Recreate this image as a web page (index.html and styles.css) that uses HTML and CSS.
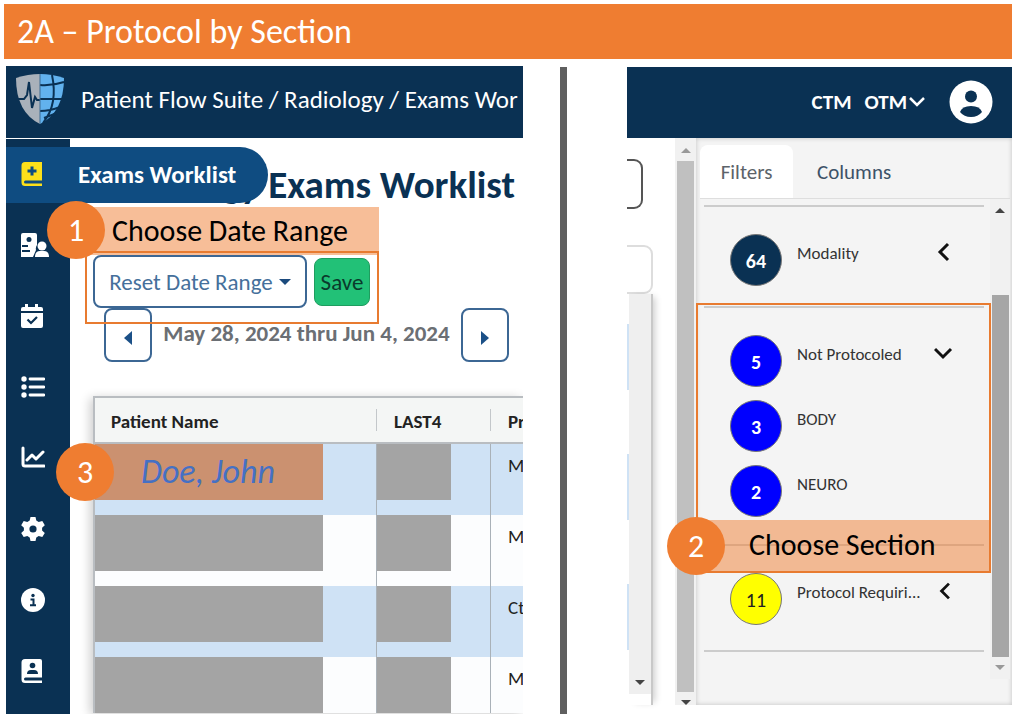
FILE: index.html
```html
<!DOCTYPE html>
<html lang="en">
<head>
<meta charset="utf-8">
<meta name="viewport" content="width=device-width, initial-scale=1">
<title>2A – Protocol by Section</title>
<link rel="stylesheet" href="styles.css">
</head>
<body>
<h1 class="slide-title">2A – Protocol by Section</h1>
<div class="slide">
  <section class="worklist">
    <header class="topbar">
      <svg class="logo" viewBox="0 0 50 52" aria-hidden="true">
        <path d="M1 5Q13 1 25 1V51Q1 39 1 5Z" fill="#a9b1ba"/>
        <path d="M25 1Q37 1 49 5Q49 39 25 51Z" fill="#62b2ee"/>
        <path d="M1 26h8l3-4 2-13 3 26 3-11 2 3h3" fill="none" stroke="#0a3153" stroke-width="2"/>
        <path d="M25 12Q37 13 49 9M25 26h24M25 38Q35 38 45 34M37 2Q40 16 38 28Q36 40 28 50M42 40L29 45" fill="none" stroke="#0a3153" stroke-width="2"/>
        <path d="M25 1v50" stroke="#3d6a92" stroke-width="1"/>
      </svg>
      <span class="crumbs">Patient Flow Suite / Radiology / Exams Wor</span>
    </header>
    <div class="workspace">
      <nav class="sidebar" aria-label="Main">
        <a class="nav-item active" href="#worklist">
          <svg class="icon" viewBox="0 0 24 24"><path d="M4 0h17v18.500H4.500a1.500 1.500 0 0 0 0 3H21V24H4a3.500 3.500 0 0 1-3.500-3.500v-17A3.500 3.500 0 0 1 4 0Z" fill="#fde01a"/><path d="M11 4.500v9M6.500 9h9" stroke="#0f4c81" stroke-width="3"/><path d="M4.500 20h13" stroke="#0f4c81" stroke-width="2"/></svg>
          <span>Exams Worklist</span>
        </a>
        <a class="nav-item" href="#patients" aria-label="Patients">
          <svg class="icon wide" viewBox="0 0 28 24"><path d="M2 0h12a2 2 0 0 1 2 2v10a6 6 0 0 0-1 5l-3 7H0V2a2 2 0 0 1 2-2Z"/><circle cx="21" cy="13" r="4.500"/><path d="M14 24q0-6 5-6h4q5 0 5 6Z"/><circle cx="8" cy="6.500" r="2.500" fill="#0a3153"/><path d="M1 13h6M1 18h8" stroke="#0a3153" stroke-width="2"/></svg>
        </a>
        <a class="nav-item" href="#calendar" aria-label="Calendar">
          <svg class="icon" viewBox="0 0 24 24"><path d="M4 0h3v3h7V0h3v3h3q2 0 2 2v2H0V5q0-2 2-2h2ZM0 9h22v13q0 2-2 2H2q-2 0-2-2Z"/><path d="M6.500 15.500l3.500 3.500 6-6" fill="none" stroke="#0a3153" stroke-width="2.200"/></svg>
        </a>
        <a class="nav-item" href="#list" aria-label="List">
          <svg class="icon" viewBox="0 0 24 24"><circle cx="3" cy="4" r="2.700"/><circle cx="3" cy="12" r="2.700"/><circle cx="3" cy="20" r="2.700"/><path d="M9 4h14M9 12h14M9 20h14" stroke="#fff" stroke-width="2.800" stroke-linecap="round"/></svg>
        </a>
        <a class="nav-item" href="#stats" aria-label="Statistics">
          <svg class="icon" viewBox="0 0 24 24"><path d="M2 2v16q0 2 2 2h19M6 14l5-5 4 4 7-7" fill="none" stroke="#fff" stroke-width="3" stroke-linecap="round" stroke-linejoin="round"/></svg>
        </a>
        <a class="nav-item" href="#settings" aria-label="Settings">
          <svg class="icon" viewBox="0 0 24 24"><path d="M9.500 0h5l.8 3.600 2.400 1.400 3.600-1.100 2.500 4.300-2.700 2.500v2.700l2.700 2.500-2.500 4.200-3.600-1.100-2.400 1.400-.8 3.600h-5l-.8-3.600L6.300 19l-3.600 1.100L.2 15.900l2.700-2.500v-2.700L.2 8.200l2.500-4.300L6.300 5l2.400-1.400Z"/><circle cx="12" cy="12" r="3.600" fill="#0a3153"/></svg>
        </a>
        <a class="nav-item" href="#info" aria-label="Information">
          <svg class="icon" viewBox="0 0 24 24"><circle cx="12" cy="12" r="12"/><circle cx="12" cy="7.500" r="1.700" fill="#0a3153"/><path d="M9.500 11.500h3V17M9 17.200h6" fill="none" stroke="#0a3153" stroke-width="2"/></svg>
        </a>
        <a class="nav-item" href="#contacts" aria-label="Contacts">
          <svg class="icon" viewBox="0 0 24 24"><path d="M4 0h15q2 0 2 2v16.500H4.500a1.500 1.500 0 0 0 0 3H21V24H4a3.500 3.500 0 0 1-3.500-3.500v-17A3.500 3.500 0 0 1 4 0Z"/><circle cx="11.500" cy="6.500" r="2.800" fill="#0a3153"/><path d="M6 15q0-4 4-4h3q4 0 4 4ZM5 19h16v1.500H5Z" fill="#0a3153"/></svg>
        </a>
      </nav>
      <main class="content">
        <h2 class="page-title">Radiology Exams Worklist</h2>
        <div class="actions">
          <button class="btn reset" type="button">Reset Date Range <i class="caret"></i></button>
          <button class="btn save" type="button">Save</button>
          <div class="range-frame"><div class="range-label">Choose Date Range</div><span class="step">1</span></div>
        </div>
        <div class="dates">
          <button class="btn arrow" type="button" aria-label="Previous"><svg viewBox="0 0 10 16"><path d="M9 1v14L1 8Z"/></svg></button>
          <span class="date-text">May 28, 2024 thru Jun 4, 2024</span>
          <button class="btn arrow" type="button" aria-label="Next"><svg viewBox="0 0 10 16"><path d="M1 1v14L9 8Z"/></svg></button>
        </div>
        <div class="grid">
          <table>
            <colgroup><col class="c-name"><col class="c-last"><col class="c-proc"></colgroup>
            <thead><tr><th>Patient Name</th><th>LAST4</th><th>Pr</th></tr></thead>
            <tbody>
              <tr><td><div class="mask named">Doe, John<span class="step">3</span></div></td><td><div class="mask"></div></td><td class="proc">M</td></tr>
              <tr><td><div class="mask"></div></td><td><div class="mask"></div></td><td class="proc">M</td></tr>
              <tr><td><div class="mask"></div></td><td><div class="mask"></div></td><td class="proc">Ct</td></tr>
              <tr><td><div class="mask"></div></td><td><div class="mask"></div></td><td class="proc">M</td></tr>
            </tbody>
          </table>
        </div>
      </main>
    </div>
  </section>
  <div class="divider"></div>
  <section class="filters">
    <header class="topbar account">
      <span>CTM</span>
      <button class="otm" type="button">OTM<svg viewBox="0 0 18 12"><path d="M2 2l7 7 7-7" fill="none" stroke="#fff" stroke-width="2.500"/></svg></button>
      <svg class="avatar" viewBox="0 0 44 44"><circle cx="22" cy="22" r="21.500" fill="#fff"/><circle cx="22" cy="16.500" r="6" fill="#0a3153"/><path d="M11 32q2-6 11-6t11 6q-4 5-11 5t-11-5Z" fill="#0a3153"/></svg>
    </header>
    <div class="filter-body">
      <div class="grid-edge">
        <div class="edge-box dark"></div>
        <div class="edge-box"></div>
        <div class="edge-grid">
          <div class="stripes"><i></i><i></i><i></i></div>
          <div class="edge-track"><i class="tri down"></i></div>
        </div>
      </div>
      <div class="page-scroll"><i class="tri up faint"></i><div class="thumb"></div><i class="tri down"></i></div>
      <aside class="panel">
        <div class="tabs" role="tablist">
          <button class="tab selected" role="tab" type="button">Filters</button>
          <button class="tab" role="tab" type="button">Columns</button>
        </div>
        <div class="panel-scroll">
          <div class="groups">
            <div class="group">
              <div class="row"><span class="count navy">64</span><span class="name">Modality</span><svg class="chev" viewBox="0 0 20 20"><path d="M14 2L6 10l8 8"/></svg></div>
            </div>
            <div class="group open">
              <div class="row"><span class="count">5</span><span class="name">Not Protocoled</span><svg class="chev" viewBox="0 0 20 20"><path d="M1 6l8 8 8-8"/></svg></div>
              <div class="row"><span class="count">3</span><span class="name">BODY</span></div>
              <div class="row"><span class="count">2</span><span class="name">NEURO</span></div>
              <div class="section-frame"><div class="section-label">Choose Section</div><span class="step">2</span></div>
            </div>
            <div class="group last">
              <div class="row"><span class="count yellow">11</span><span class="name">Protocol Requiri...</span><svg class="chev" viewBox="0 0 20 20"><path d="M14 2L6 10l8 8"/></svg></div>
            </div>
          </div>
          <div class="panel-bar"><i class="tri up"></i><div class="thumb"></div><i class="tri down faint"></i></div>
        </div>
      </aside>
    </div>
  </section>
</div>
</body>
</html>
```
FILE: styles.css
```css
* { box-sizing: border-box; }
body {
  margin: 0;
  padding: 4px 8px 10px 4px;
  background: #fff;
  color: #222;
  font-family: Calibri, Carlito, Lato, sans-serif;
}
button { font-family: inherit; cursor: pointer; }
.slide-title {
  margin: 0;
  padding: 0 13px;
  background: #ef7d31;
  color: #fff;
  font-size: 34px;
  font-weight: 400;
  line-height: 55px;
}
.slide {
  display: grid;
  grid-template-columns: minmax(0, 517fr) 104px minmax(0, 385fr);
  padding: 7px 0 0 2px;
}
.topbar {
  display: flex;
  align-items: center;
  height: 72px;
  background: #0a3153;
  color: #fff;
}

/* Worklist */
.worklist { overflow: hidden; }
.worklist .topbar { padding: 0 0 6px 9px; }
.logo { flex: none; width: 50px; height: 52px; }
.crumbs { margin-left: 16px; font-size: 25px; white-space: nowrap; }
.workspace { display: flex; padding-top: 1px; }
.sidebar { flex: none; width: 64px; height: 575px; background: #0a3153; }
.nav-item {
  display: flex;
  align-items: center;
  height: 56px;
  margin: 0 0 15px;
  padding-left: 15px;
  color: #fff;
  text-decoration: none;
}
.nav-item.active {
  position: relative;
  z-index: 2;
  width: 262px;
  margin: 8px 0 14px;
  padding-bottom: 2px;
  gap: 33px;
  border-radius: 0 28px 28px 0;
  background: #0f4c81;
  font-size: 25px;
  font-weight: 700;
  white-space: nowrap;
}
.icon { flex: none; width: 24px; height: 24px; fill: #fff; }
.icon.wide { width: 28px; }
.content { flex: 1; min-width: 0; padding-left: 23px; }
.page-title {
  display: flex;
  justify-content: flex-end;
  margin: 0;
  padding: 24px 8px 0 0;
  color: #0a3153;
  font-size: 39px;
  line-height: 44px;
  white-space: nowrap;
}
.actions {
  position: relative;
  display: flex;
  align-items: flex-start;
  gap: 7px;
  margin-top: 48px;
}
.btn {
  border: 2px solid #3c6794;
  border-radius: 8px;
  background: #fff;
  color: #45709b;
  font-size: 23px;
}
.reset {
  display: flex;
  align-items: center;
  justify-content: center;
  gap: 6px;
  width: 214px;
  height: 53px;
  padding: 0;
}
.caret {
  border: 6px solid transparent;
  border-top-color: #1b4a7d;
  border-bottom: 0;
}
.save {
  width: 56px;
  height: 48px;
  margin-top: 3px;
  padding: 0;
  border: 1px solid #1f9d5f;
  background: #22c177;
  color: #0a3a2c;
}
.range-frame {
  position: absolute;
  top: -48px;
  left: -8px;
  width: 294px;
  height: 117px;
  pointer-events: none;
}
.range-frame::after {
  content: "";
  position: absolute;
  inset: 44px 0 0;
  border: 2px solid #e87b30;
}
.range-label, .section-label {
  background: rgba(240, 125, 49, .5);
  color: #000;
  font-size: 30px;
  white-space: nowrap;
}
.range-label { height: 48px; padding-left: 27px; line-height: 48px; }
.step {
  position: absolute;
  z-index: 3;
  display: flex;
  align-items: center;
  justify-content: center;
  width: 58px;
  height: 58px;
  border-radius: 50%;
  background: #ef7d31;
  color: #fff;
  font-size: 32px;
  font-style: normal;
}
.range-frame .step { top: -6px; left: -38px; }
.dates { display: flex; padding: 0 14px 0 11px; justify-content: space-between; }
.arrow { width: 48px; height: 54px; padding: 0; }
.arrow svg { width: 10px; height: 16px; fill: #1b5087; vertical-align: middle; }
.date-text { color: #6b6f74; font-size: 23px; font-weight: 700; line-height: 50px; white-space: nowrap; }
.grid {
  margin-top: 34px;
  border: solid #b9bdc1;
  border-width: 2px 0 0 2px;
  box-shadow: -3px 2px 10px rgba(0, 0, 0, .2);
}
table { width: 100%; border-collapse: separate; border-spacing: 0; table-layout: fixed; }
.c-name { width: 281px; }
.c-last { width: 114px; }
th {
  position: relative;
  height: 46px;
  padding: 2px 0 0 16px;
  border-bottom: 2px solid #b9bdc1;
  background: #f4f6f5;
  color: #222;
  font-size: 19px;
  text-align: left;
  white-space: nowrap;
}
th + th { padding-left: 18px; }
th + th::before {
  content: "";
  position: absolute;
  inset: 11px auto 11px 0;
  border-left: 1px solid #c3c7ca;
}
td { height: 71px; padding: 0; vertical-align: top; }
td + td { border-left: 1px solid #a9b1b8; }
tbody tr { background: #fcfdfe; }
tbody tr:nth-child(odd) { background: #cfe2f5; }
tbody tr:last-child td { height: 56px; }
.mask { width: 74px; height: 56px; background: #a4a4a4; }
td:first-child .mask { width: 228px; }
.mask.named {
  position: relative;
  padding-left: 46px;
  background: #cb9170;
  color: #4570c4;
  font-size: 34px;
  font-style: italic;
  line-height: 55px;
}
.named .step { top: -1px; left: -39px; }
.proc { padding: 10px 0 0 17px; font-size: 19px; line-height: 24px; white-space: nowrap; }

.divider { justify-self: center; width: 7px; margin: 1px 0 0 -24px; background: #5f5f5f; }

/* Filters */
.filters { margin-top: 1px; }
.account { justify-content: flex-end; gap: 13px; padding: 0 19px 2px 0; height: 71px; font-size: 21px; font-weight: 700; }
.otm { display: flex; align-items: center; padding: 0; border: 0; background: none; color: #fff; font-size: 21px; font-weight: 700; }
.otm svg { width: 18px; height: 12px; margin-left: 1px; }
.avatar { width: 44px; height: 44px; margin-left: 10px; }
.filter-body { display: flex; height: 567px; }
.grid-edge { flex: none; display: flex; flex-direction: column; width: 48px; padding-top: 21px; }
.edge-box {
  width: 26px;
  height: 49px;
  border: 2px solid #ddd;
  border-left: 0;
  border-radius: 0 9px 9px 0;
}
.edge-box.dark { width: 16px; height: 50px; margin-bottom: 36px; border-color: #555; }
.edge-grid {
  display: flex;
  flex: 1;
  width: 26px;
  border-right: 2px solid #c8c8c8;
  box-shadow: 5px 0 7px -3px rgba(0, 0, 0, .2);
}
.stripes { display: flex; flex-direction: column; gap: 64px; width: 2px; padding-top: 30px; }
.stripes i { height: 66px; background: #cfe2f5; }
.edge-track { display: flex; flex: 1; align-items: flex-end; justify-content: center; margin-bottom: 11px; padding-bottom: 9px; background: #efefef; }
.tri { border: 5px solid transparent; }
.tri.up { border-top: 0; border-bottom-color: #444; }
.tri.down { border-bottom: 0; border-top-color: #444; }
.tri.up.faint { border-bottom-color: #999; }
.tri.down.faint { border-top-color: #999; }
.page-scroll {
  display: flex;
  flex: none;
  flex-direction: column;
  align-items: center;
  gap: 8px;
  width: 21px;
  padding-top: 10px;
  overflow: hidden;
  background: #f1f1f1;
}
.page-scroll .thumb { flex: 1; width: 17px; background: #c0c0c0; }
.panel {
  display: flex;
  flex: 1;
  flex-direction: column;
  min-width: 0;
  padding: 7px 2px 0 4px;
  background: #f4f4f4;
  box-shadow: inset 0 0 5px rgba(0, 0, 0, .2);
}
.tabs { display: flex; border-bottom: 1px solid #dedede; }
.tab {
  height: 53px;
  padding: 0 24px;
  border: 0;
  background: none;
  color: #3d5268;
  font-size: 21px;
}
.tab.selected {
  width: 93px;
  margin-bottom: -1px;
  padding: 0;
  border-radius: 8px 8px 0 0;
  background: #fff;
  color: #5c636a;
}
.panel-scroll { display: flex; height: 480px; }
.groups { flex: 1; min-width: 0; padding: 6px 6px 0 4px; }
.group { position: relative; padding: 27px 30px 20px 26px; border-top: 2px solid #ccc; }
.group.open { padding-bottom: 27px; }
.group.last { padding-bottom: 25px; border-bottom: 2px solid #ccc; }
.row { display: flex; align-items: flex-start; gap: 15px; }
.row + .row { margin-top: 13px; }
.count {
  display: flex;
  flex: none;
  align-items: center;
  justify-content: center;
  width: 52px;
  height: 52px;
  padding-top: 2px;
  border: 1px solid #777;
  border-radius: 50%;
  background: #00f;
  color: #fff;
  font-size: 20px;
  font-weight: 700;
}
.count.navy { background: #0a3153; }
.count.yellow { background: #ff0; color: #222; font-weight: 400; }
.name { flex: 1; padding-top: 8px; color: #333; font-size: 17px; line-height: 24px; white-space: nowrap; }
.chev { width: 20px; height: 20px; margin-top: 8px; fill: none; stroke: #111; stroke-width: 3; }
.section-frame {
  position: absolute;
  z-index: 1;
  inset: -5px -7px -29px -8px;
  display: flex;
  flex-direction: column;
  justify-content: flex-end;
  border: 2px solid #e87b30;
  pointer-events: none;
}
.section-label { height: 51px; padding-left: 51px; line-height: 50px; }
.section-frame .step { bottom: -4px; left: -31px; }
.panel-bar {
  display: flex;
  flex-direction: column;
  align-items: center;
  width: 20px;
  padding: 9px 0;
  background: #f1f1f1;
}
.panel-bar .thumb { width: 17px; height: 362px; margin: auto 0 8px; background: #a6a6a6; }
```
